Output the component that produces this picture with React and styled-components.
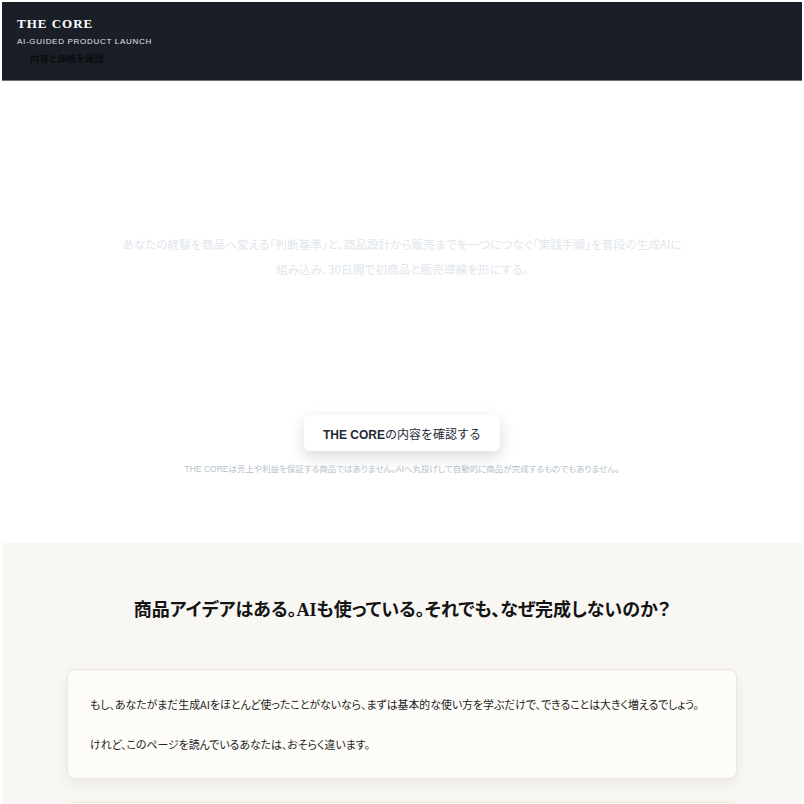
import React from "react";
import styled, { createGlobalStyle } from "styled-components";

const Global = createGlobalStyle`
  body {
    margin: 2px;
    background: #ffffff;
    font-family: "Noto Sans CJK JP", "Noto Sans", sans-serif;
    font-feature-settings: "palt";
  }
  * { box-sizing: border-box; }
`;

export default function App() {
  return (
    <>
      <Global />
      <Header>
        <Brand>THE CORE</Brand>
        <Tagline>AI-GUIDED PRODUCT LAUNCH</Tagline>
        <NavLink href="#price">内容と価格を確認</NavLink>
      </Header>

      <Hero>
        <Lead>
          あなたの経験を商品へ変える「判断基準」と、商品設計から販売までを一つにつなぐ「実践手順」を普段の生成AIに
          <br />
          組み込み、30日間で初商品と販売導線を形にする。
        </Lead>
        <CtaButton>
          <b>THE CORE</b>の内容を確認する
        </CtaButton>
        <Note>
          THE COREは売上や利益を保証する商品ではありません。AIへ丸投げして自動的に商品が完成するものでもありません。
        </Note>
      </Hero>

      <Problem>
        <Heading>商品アイデアはある。AIも使っている。それでも、なぜ完成しないのか？</Heading>
        <Card>
          <Para>
            もし、あなたがまだ生成AIをほとんど使ったことがないなら、まずは基本的な使い方を学ぶだけで、できることは大きく増えるでしょう。
          </Para>
          <Para>けれど、このページを読んでいるあなたは、おそらく違います。</Para>
        </Card>
        <Card />
      </Problem>
    </>
  );
}

const Header = styled.header`
  display: flex;
  flex-flow: column nowrap;
  align-items: flex-start;
  background: #1a1f27;
  padding: 14px 15px 11px;
  border-bottom: 1px solid #6b7078;
  height: 79px;
`;

const Brand = styled.div`
  font-family: "Liberation Serif", serif;
  font-weight: 700;
  font-size: 13px;
  letter-spacing: 1px;
  line-height: 16px;
  color: #ffffff;
`;

const Tagline = styled.div`
  font-family: "Liberation Sans", sans-serif;
  font-size: 8px;
  letter-spacing: 0.7px;
  line-height: 12px;
  margin-top: 4px;
  color: #e2e4e7;
`;

const NavLink = styled.a`
  margin: 3px 0 0 13px;
  font-size: 9.5px;
  font-weight: 700;
  line-height: 14px;
  color: #0b0d10;
  text-decoration: none;
`;

const Hero = styled.section`
  display: flex;
  flex-flow: column nowrap;
  align-items: center;
  padding: 150px 20px 68px;
  background: #ffffff;
  text-align: center;
`;

const Lead = styled.p`
  margin: 0;
  font-size: 11.7px;
  line-height: 25px;
  color: #dfe6eb;
`;

const CtaButton = styled.button`
  margin-top: 134px;
  width: 196px;
  height: 36px;
  border: none;
  border-radius: 6px;
  background: #ffffff;
  box-shadow: 0 6px 16px rgba(15, 23, 42, 0.16);
  font-family: "Liberation Sans", "Noto Sans CJK JP", sans-serif;
  font-size: 12px;
  color: #1f2937;
  cursor: pointer;

  b {
    font-weight: 700;
  }
`;

const Note = styled.p`
  margin: 12px 0 0;
  font-family: "Liberation Sans", "Noto Sans CJK JP", sans-serif;
  font-size: 8.5px;
  line-height: 12px;
  color: #b6c2ca;
`;

const Problem = styled.section`
  display: flex;
  flex-flow: column nowrap;
  align-items: center;
  gap: 23px;
  padding: 54px 65px 40px;
  background: #f8f7f3;
`;

const Heading = styled.h2`
  margin: 0 0 23px;
  font-family: "Liberation Serif", "Noto Sans CJK JP", serif;
  font-weight: 700;
  font-size: 18px;
  line-height: 26px;
  color: #141414;
`;

const Card = styled.div`
  display: flex;
  flex-flow: column nowrap;
  gap: 20px;
  width: 100%;
  min-height: 108px;
  padding: 24px 22px;
  background: #fdfcf8;
  border: 1px solid #ebe7db;
  border-radius: 8px;
  box-shadow: 0 6px 14px rgba(60, 50, 30, 0.07);
`;

const Para = styled.p`
  margin: 0;
  font-size: 10.9px;
  line-height: 20px;
  color: #222222;
`;
